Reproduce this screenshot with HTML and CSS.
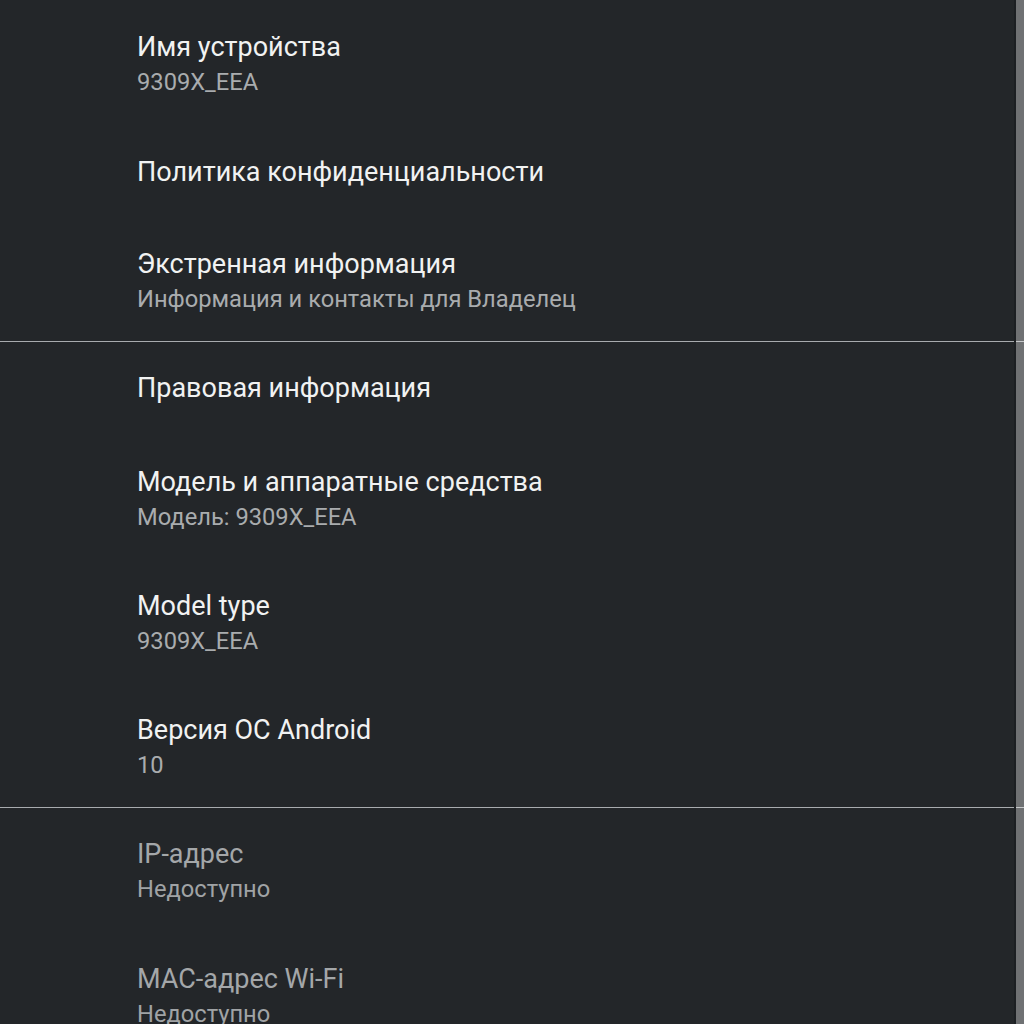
FILE: index.html
```html
<!DOCTYPE html>
<html lang="ru">
<head>
    <meta charset="UTF-8">
    <meta name="viewport" content="width=device-width, initial-scale=1.0">
    <title>О телефоне</title>
    <link rel="stylesheet" href="styles.css">
</head>
<body>
    <div class="screen">
        <div class="list">
            <div class="section">
                <div class="item">
                    <div class="title">Имя устройства</div>
                    <div class="summary">9309X_EEA</div>
                </div>
                <div class="item single">
                    <div class="title">Политика конфиденциальности</div>
                </div>
                <div class="item">
                    <div class="title">Экстренная информация</div>
                    <div class="summary">Информация и контакты для Владелец</div>
                </div>
            </div>
            <div class="section">
                <div class="item single">
                    <div class="title">Правовая информация</div>
                </div>
                <div class="item">
                    <div class="title">Модель и аппаратные средства</div>
                    <div class="summary">Модель: 9309X_EEA</div>
                </div>
                <div class="item">
                    <div class="title">Model type</div>
                    <div class="summary">9309X_EEA</div>
                </div>
                <div class="item">
                    <div class="title">Версия ОС Android</div>
                    <div class="summary">10</div>
                </div>
            </div>
            <div class="section">
                <div class="item disabled">
                    <div class="title">IP-адрес</div>
                    <div class="summary">Недоступно</div>
                </div>
                <div class="item disabled">
                    <div class="title">MAC-адрес Wi-Fi</div>
                    <div class="summary">Недоступно</div>
                </div>
            </div>
        </div>
        <div class="scrollbar"></div>
    </div>
</body>
</html>
```

FILE: styles.css
```css
* {
    margin: 0;
    padding: 0;
    box-sizing: border-box;
    font-family: Roboto, 'Noto Sans', sans-serif;
}
body {
    width: 1024px;
    height: 1024px;
    overflow: hidden;
    background: #232629;
}
.screen {
    position: relative;
    height: 100%;
}
.list {
    display: flex;
    flex-direction: column;
}
.section + .section {
    border-top: 1.5px solid #a8abae;
}
.item {
    height: 124px;
    padding: 32px 0 0 137px;
}
.item.single {
    height: 93px;
    padding-top: 33px;
}
.section + .section .item:first-child {
    padding-top: 31px;
}
.title {
    font-size: 27px;
    line-height: 30px;
    color: #f1f2f2;
}
.summary {
    font-size: 23.7px;
    line-height: 30px;
    margin-top: 5px;
    color: #a9acae;
}
.disabled .title {
    color: #a4a7a9;
}
.disabled .summary {
    color: #a0a3a5;
}
.scrollbar {
    position: absolute;
    top: 0;
    right: 0;
    width: 10px;
    height: 100%;
    background: rgba(255, 255, 255, 0.35);
    border-left: 2px solid #1c1f22;
}
```
